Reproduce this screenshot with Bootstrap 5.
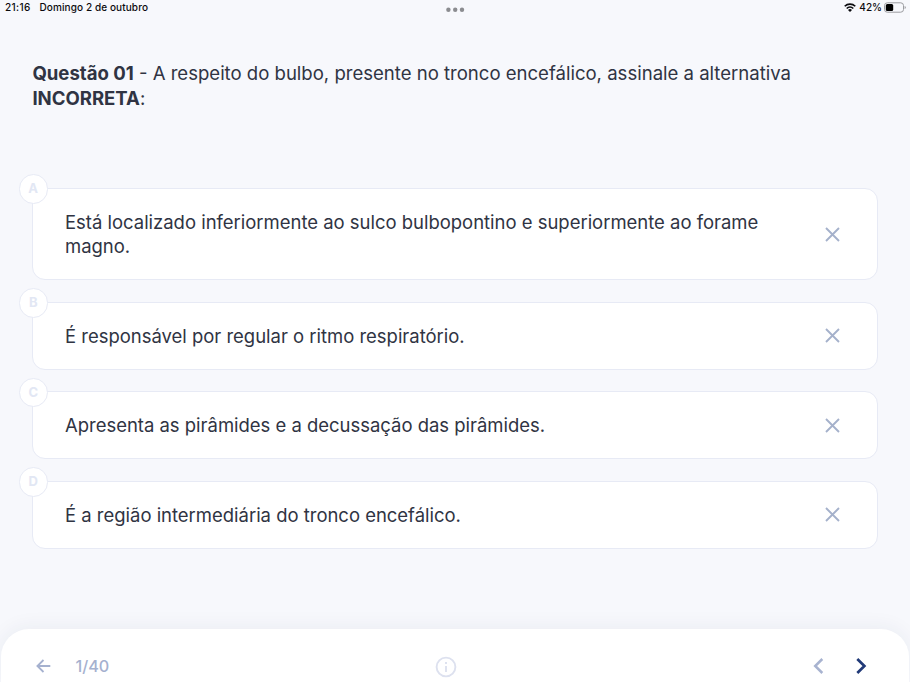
<!DOCTYPE html>
<html lang="pt">
<head>
<meta charset="utf-8">
<meta name="viewport" content="width=device-width, initial-scale=1">
<title>Questão 01</title>
<link href="https://cdn.jsdelivr.net/npm/bootstrap@5.3.0/dist/css/bootstrap.min.css" rel="stylesheet">
<style>
body{background:#f7f8fc;color:#303443;font-family:Inter,"Liberation Sans",sans-serif;height:682px;overflow:hidden}
.status{height:16px;font-size:10px;font-weight:500;line-height:15px;color:#0b0b0e;padding:0 4px 0 5px}
.status .side{flex:1 1 0}
.time{letter-spacing:.35px}
.date{margin-left:9px;letter-spacing:.1px}
.dots{margin-right:1px}
.percent{margin:0 2px 0 3px}
.question{margin:45px 32px 0;padding-left:.4px;font-size:18.56px;line-height:24.5px;height:126.7px}
.options{padding:0 32px;gap:21.2px}
.option{border:1px solid #e7eaf5;border-radius:13px;background:#fff;min-height:68.3px;padding:21px 37px 20.8px 32px;font-size:18.47px;line-height:24.5px}
.option p{max-width:730px}
.letter{left:-14.5px;top:-14.5px;width:29.4px;height:29.4px;border:1px solid #e7eaf5;background:#fff;color:#e2e7f4;font-size:13px;font-weight:700;line-height:1}
.footbar{height:53px;margin:0 1px;border-radius:28px 28px 0 0;background:#fff;box-shadow:0 -2px 20px rgba(40,50,90,.06);color:#a5b1cf}
.footbar .side{flex:1 1 0}
.back{padding:27px 0 0 35px;gap:24.5px}
.counter{font-size:16.2px;font-weight:500;line-height:20px}
.info{margin:26.5px 12px 0 0}
.pager{padding:29px 42px 0 0;gap:32px}
.footbar .pager{flex-basis:-13px}
svg{display:block;flex:none}
</style>
<script src="https://cdn.jsdelivr.net/npm/bootstrap@5.3.0/dist/js/bootstrap.bundle.min.js"></script>
</head>
<body class="d-flex flex-column">
<header class="status d-flex">
  <div class="side d-flex"><span class="time">21:16</span><span class="date">Domingo 2 de outubro</span></div>
  <svg class="dots" width="20" height="16" fill="#8b8c90"><circle cx="3.4" cy="9.7" r="2.2"/><circle cx="10.2" cy="9.7" r="2.2"/><circle cx="17" cy="9.7" r="2.2"/></svg>
  <div class="side d-flex justify-content-end">
    <svg width="12" height="15" viewBox="0 0 12 15" fill="none" stroke="#0b0b0e" stroke-width="1.6"><path d="M.7 6.3a7.6 7.6 0 0 1 10.6 0M2.7 8.5a4.7 4.7 0 0 1 6.6 0"/><path d="M4 9.9a2.9 2.9 0 0 1 4 0L6 12z" fill="#0b0b0e" stroke="none"/></svg>
    <span class="percent">42%</span>
    <svg width="22" height="15" viewBox="0 0 22 15"><rect x=".5" y="2.8" width="19" height="9.4" rx="2.8" fill="none" stroke="#9b9ca0"/><rect x="1.8" y="4.1" width="7.4" height="6.8" rx="1.5" fill="#000"/><path d="M20.6 6q1.2.4 1.2 1.5t-1.2 1.5z" fill="#9b9ca0"/></svg>
  </div>
</header>
<main class="flex-grow-1">
  <h1 class="question fw-normal"><b>Questão 01</b> - A respeito do bulbo, presente no tronco encefálico, assinale a alternativa <b>INCORRETA</b>:</h1>
  <div class="options d-flex flex-column">
    <div class="option position-relative d-flex align-items-center justify-content-between"><span class="letter position-absolute rounded-circle d-flex align-items-center justify-content-center">A</span><p class="m-0">Está localizado inferiormente ao sulco bulbopontino e superiormente ao forame magno.</p><svg width="15" height="15" fill="none" stroke="#a5b1cb" stroke-width="1.9"><path d="M1 1 14 14M14 1 1 14"/></svg></div>
    <div class="option position-relative d-flex align-items-center justify-content-between"><span class="letter position-absolute rounded-circle d-flex align-items-center justify-content-center">B</span><p class="m-0">É responsável por regular o ritmo respiratório.</p><svg width="15" height="15" fill="none" stroke="#a5b1cb" stroke-width="1.9"><path d="M1 1 14 14M14 1 1 14"/></svg></div>
    <div class="option position-relative d-flex align-items-center justify-content-between"><span class="letter position-absolute rounded-circle d-flex align-items-center justify-content-center">C</span><p class="m-0">Apresenta as pirâmides e a decussação das pirâmides.</p><svg width="15" height="15" fill="none" stroke="#a5b1cb" stroke-width="1.9"><path d="M1 1 14 14M14 1 1 14"/></svg></div>
    <div class="option position-relative d-flex align-items-center justify-content-between"><span class="letter position-absolute rounded-circle d-flex align-items-center justify-content-center">D</span><p class="m-0">É a região intermediária do tronco encefálico.</p><svg width="15" height="15" fill="none" stroke="#a5b1cb" stroke-width="1.9"><path d="M1 1 14 14M14 1 1 14"/></svg></div>
  </div>
</main>
<footer class="footbar d-flex align-items-start">
  <div class="side d-flex align-items-center back">
    <svg width="15" height="14" fill="none" stroke="currentColor" stroke-width="1.8"><path d="M14.3 7H1.5M7.5 1 1.4 7l6.1 6"/></svg>
    <span class="counter">1/40</span>
  </div>
  <svg class="info" width="22" height="22" fill="none" stroke="#dde1ef" stroke-width="1.9"><circle cx="11" cy="11" r="9.4"/><path d="M11 10v6M11 6v2.1"/></svg>
  <div class="side d-flex align-items-center justify-content-end pager">
    <svg width="11" height="16" fill="none" stroke="#a8b3d0" stroke-width="2.5"><path d="M9.3 1 2.2 8l7.1 7"/></svg>
    <svg width="11" height="16" fill="none" stroke="#213a78" stroke-width="2.7"><path d="M1.3 1 8.4 8l-7.1 7"/></svg>
  </div>
</footer>
</body>
</html>
